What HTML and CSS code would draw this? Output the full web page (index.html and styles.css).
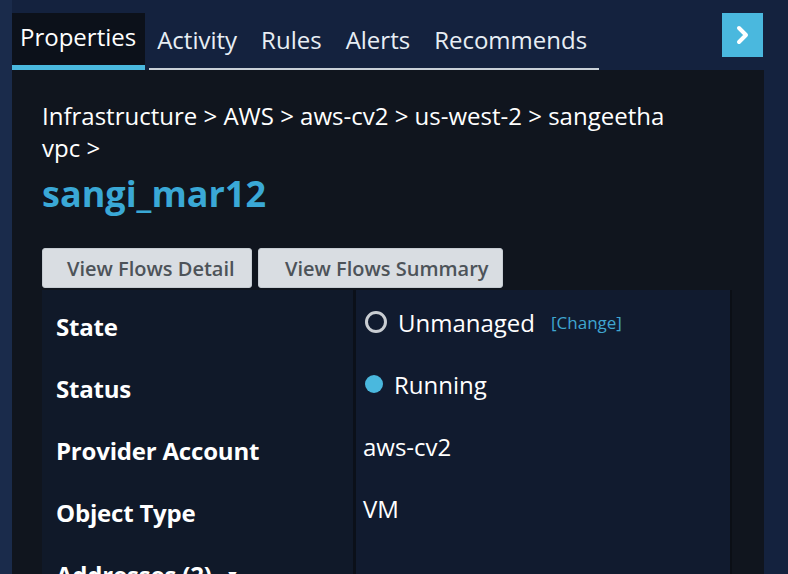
FILE: index.html
```html
<!DOCTYPE html>
<html lang="en">
<head>
  <meta charset="UTF-8">
  <meta name="viewport" content="width=device-width, initial-scale=1.0">
  <title>sangi_mar12 - Properties</title>
  <link rel="stylesheet" href="styles.css">
</head>
<body>
  <div class="sidebar">
    <!-- Tabs -->
    <nav class="tabs">
      <a class="tab active" href="#">Properties</a>
      <a class="tab first" href="#">Activity</a>
      <a class="tab" href="#">Rules</a>
      <a class="tab" href="#">Alerts</a>
      <a class="tab" href="#">Recommends</a>
      <button class="collapse" type="button" title="Collapse">
        <svg width="18" height="22" viewBox="0 0 18 22"><path d="M5 4 L12 11 L5 18" fill="none" stroke="#fff" stroke-width="4" stroke-linecap="round" stroke-linejoin="round"/></svg>
      </button>
    </nav>

    <!-- Properties panel -->
    <section class="panel">
      <p class="crumbs">Infrastructure &gt; AWS &gt; aws-cv2 &gt; us-west-2 &gt; sangeetha vpc &gt;</p>
      <h1 class="name">sangi_mar12</h1>

      <div class="actions">
        <button type="button" class="btn">View Flows Detail</button>
        <button type="button" class="btn">View Flows Summary</button>
      </div>

      <div class="props">
        <div class="row">
          <div class="label">State</div>
          <div class="value"><span class="ring"></span>Unmanaged <a class="change" href="#">[Change]</a></div>
        </div>
        <div class="row">
          <div class="label">Status</div>
          <div class="value"><span class="dot"></span>Running</div>
        </div>
        <div class="row">
          <div class="label">Provider Account</div>
          <div class="value">aws-cv2</div>
        </div>
        <div class="row">
          <div class="label">Object Type</div>
          <div class="value">VM</div>
        </div>
        <div class="row">
          <div class="label">Addresses (2) <span class="caret">&#9660;</span></div>
          <div class="value"></div>
        </div>
      </div>
    </section>
  </div>
</body>
</html>
```

FILE: styles.css
```css
body {
  margin: 0;
  font-family: "Open Sans", "Noto Sans", sans-serif;
  background: linear-gradient(to right, #1a2b4b 0, #1a2b4b 12px, #14223e 12px);
  color: #fff;
  overflow: hidden;
}
.sidebar {
  width: 752px;
  margin-left: 12px;
}
.tabs {
  display: flex;
  align-items: flex-end;
  height: 70px;
}
.tab {
  height: 48px;
  line-height: 48px;
  padding: 0 12px 4px;
  font-size: 24px;
  color: #e8eef4;
  text-decoration: none;
  border-bottom: 2px solid #c9d1d8;
}
.tab.active {
  padding: 0 9px 4px 8px;
  margin-right: 4px;
  background-color: #0c111a;
  color: #fff;
  border-bottom: 5px solid #4ab8de;
}
.tab.first {
  padding-left: 8px;
}
.collapse {
  align-self: flex-start;
  margin: 13px 1px 0 auto;
  width: 41px;
  height: 44px;
  padding: 0;
  border: none;
  background-color: #4ab8de;
  display: flex;
  align-items: center;
  justify-content: center;
  cursor: pointer;
}
.panel {
  background-color: #10151e;
  padding: 30px 30px 0;
  height: 504px;
}
.crumbs {
  margin: 0;
  max-width: 640px;
  font-size: 24px;
  line-height: 32px;
}
.name {
  margin: 8px 0 0;
  font-size: 36px;
  line-height: 44px;
  font-weight: 700;
  color: #3aa8d6;
}
.actions {
  display: flex;
  gap: 6px;
  margin-top: 32px;
}
.btn {
  height: 40px;
  padding: 0 0 0 24px;
  text-align: left;
  border: 1px solid #c6ccd2;
  border-radius: 3px;
  background-color: #d9dde2;
  color: #4d5359;
  font-family: inherit;
  font-size: 20px;
  font-weight: 600;
}
.btn:first-child {
  width: 210px;
}
.btn:last-child {
  width: 245px;
  padding-left: 26px;
}
.props {
  margin-top: 2px;
  width: 690px;
  padding-top: 5px;
  background: linear-gradient(to right, #101929 0, #101929 311px, #0b1019 311px, #0b1019 314px, #111b2f 314px, #111b2f 688px, #0b0f16 688px);
}
.row {
  display: grid;
  grid-template-columns: 321px 1fr;
  height: 62px;
}
.label {
  display: flex;
  align-items: center;
  padding-left: 14px;
  font-size: 24px;
  font-weight: 700;
  letter-spacing: -0.2px;
}
.value {
  display: flex;
  align-items: center;
  padding-bottom: 8px;
  font-size: 24px;
}
.ring {
  width: 16px;
  height: 16px;
  border: 3px solid #c9cdd2;
  border-radius: 50%;
  margin: 0 11px 0 2px;
}
.dot {
  width: 18px;
  height: 18px;
  border-radius: 50%;
  background-color: #4ab8de;
  margin: 0 11px 0 2px;
}
.change {
  margin-left: 16px;
  font-size: 17px;
  color: #3fa6cf;
  text-decoration: none;
}
.caret {
  font-size: 14px;
  margin-left: 14px;
}
```
